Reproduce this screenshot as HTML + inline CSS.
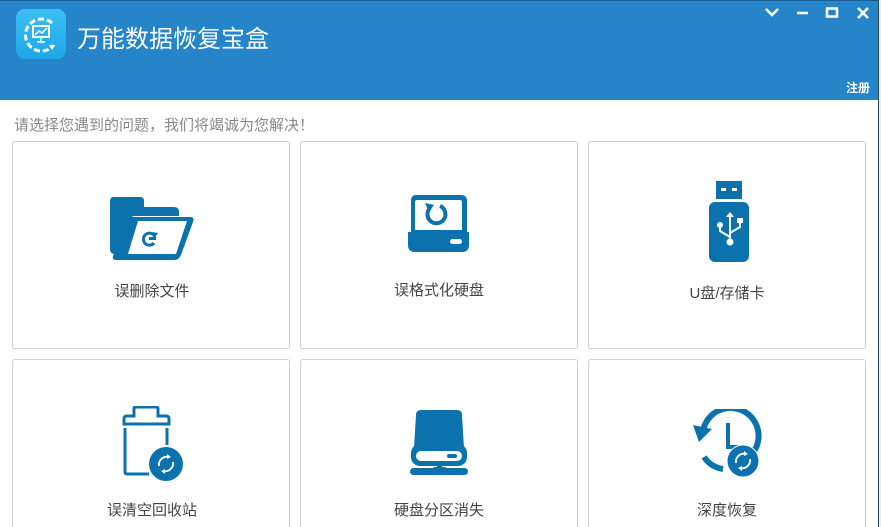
<!DOCTYPE html>
<html style="width:881px;height:527px;overflow:hidden"><head><meta charset="utf-8"><style>
html,body{margin:0}
body{width:881px;height:527px;overflow:hidden;background:#fff;font-family:"Liberation Sans","Noto Sans CJK SC",sans-serif;position:relative}
.hd{position:absolute;left:0;top:0;width:878px;height:100px;background:#2585c8;border-top:1px solid #1a5d8e;box-sizing:border-box}
.strip{position:absolute;left:878px;top:0;width:3px;height:527px;background:#e8eef2;border-left:1px solid #2a4a60;box-sizing:border-box}
.logo{position:absolute;left:16px;top:9px;width:50px;height:50px;border-radius:9px;background:linear-gradient(#3cc0f2,#1ea6e8)}
.title{position:absolute;left:77px;top:19px;color:#fff;font-size:24px}
.reg{position:absolute;left:846px;top:79px;color:#fff;font-size:12px;font-weight:bold}
.tip{position:absolute;left:14px;top:114px;color:#888;font-size:15px}
.card{position:absolute;width:278px;height:208px;border:1px solid #d0d0d0;border-radius:3px;box-sizing:border-box}
.lb{position:absolute;width:278px;text-align:center;font-size:15px;color:#444}
svg{position:absolute}
</style></head><body>
<div class="hd"></div>
<div class="strip"></div>
<div class="logo"><svg width="50" height="50" viewBox="0 0 50 50"><path d="M36 14 A16 16 0 1 0 38 36" fill="none" stroke="#fff" stroke-width="3" stroke-dasharray="6 3"/><path d="M33 36 l6 0 l-3 5z" fill="#fff"/><rect x="17" y="17" width="16" height="11" fill="none" stroke="#fff" stroke-width="2"/><path d="M19 26 l4-4 3 2 5-5 M25 28 v4 M21 33 h8" stroke="#fff" stroke-width="1.5" fill="none"/></svg></div>
<div class="title">万能数据恢复宝盒</div>
<svg style="left:764px;top:6px" width="80" height="14"><path d="M2 3 l6 6 6-6" stroke="#fff" stroke-width="2.5" fill="none"/><path d="M33 7 h11" stroke="#fff" stroke-width="2.5"/><rect x="63" y="2.5" width="10" height="8" stroke="#fff" stroke-width="2.5" fill="none"/></svg>
<svg style="left:856px;top:7px" width="14" height="12"><path d="M2 1 l10 10 M12 1 l-10 10" stroke="#fff" stroke-width="2.5"/></svg>
<div class="reg">注册</div>
<div class="tip">请选择您遇到的问题，我们将竭诚为您解决！</div>

<div class="card" style="left:12px;top:141px"></div>
<div class="card" style="left:300px;top:141px"></div>
<div class="card" style="left:588px;top:141px"></div>
<div class="card" style="left:12px;top:359px;height:180px"></div>
<div class="card" style="left:300px;top:359px;height:180px"></div>
<div class="card" style="left:588px;top:359px;height:180px"></div>

<div class="lb" style="left:13px;top:280px">误删除文件</div>
<div class="lb" style="left:300px;top:279px">误格式化硬盘</div>
<div class="lb" style="left:588px;top:282px">U盘/存储卡</div>
<div class="lb" style="left:13px;top:499px">误清空回收站</div>
<div class="lb" style="left:300px;top:499px">硬盘分区消失</div>
<div class="lb" style="left:588px;top:499px">深度恢复</div>

<svg style="left:110px;top:197px" width="84" height="64" viewBox="0 0 84 64"><path d="M3 0 h27 q4 0 4 4 v6 h30 q5 0 5 5 v4 h-44 q-4 0 -6 4 l-14 38 v-4 h0 q-5 0 -5 -5 v-47 q0 -5 3 -5z" fill="#0b72ad"/><path d="M22 20 h58 q5 0 3 5 l-12 33 q-2 5 -7 5 h-58 q-4 0 -3 -4 l13 -34 q2 -5 6 -5z" fill="#0b72ad"/><path d="M28 24 h49 l-11 33 h-48z" fill="#fff"/><path d="M45 40 a6 6 0 1 0 -1 6" fill="none" stroke="#0b72ad" stroke-width="3"/><path d="M39 41.5 h7" stroke="#0b72ad" stroke-width="3"/><path d="M42 35 l6 1 -3 4z" fill="#0b72ad"/></svg>
<svg style="left:408px;top:195px" width="62" height="58" viewBox="0 0 62 58"><path d="M8 0 h45 q6 0 6 6 v34 h-56 v-34 q0 -6 5 -6z" fill="#0b72ad"/><path d="M9 5 h43 q2 0 2 2 v28 h-47 v-28 q0 -2 2 -2z" fill="#fff"/><path d="M0 37 h61 v13 q0 7 -7 7 h-47 q-7 0 -7 -7z" fill="#0b72ad"/><rect x="42" y="44" width="12" height="5" rx="2.5" fill="#fff"/><path d="M22 13 a9 9 0 1 0 10 -2" fill="none" stroke="#0b72ad" stroke-width="4"/><path d="M17 8 l9 2 -5 7z" fill="#0b72ad"/></svg>
<svg style="left:708px;top:181px" width="42" height="82" viewBox="0 0 42 82"><rect x="8" y="0" width="26" height="18" fill="#0b72ad"/><rect x="13" y="7" width="5" height="3" fill="#fff"/><rect x="24" y="7" width="5" height="3" fill="#fff"/><rect x="1" y="21" width="40" height="60" rx="6" fill="#0b72ad"/><path d="M22 34 v24 M12 44 v6 l10 6 M32 40 v6 l-10 6" stroke="#fff" stroke-width="2" fill="none"/><path d="M18 36 l4 -5 4 5z" fill="#fff"/><circle cx="12" cy="44" r="3" fill="#fff"/><rect x="29" y="37" width="6" height="5" fill="#fff"/><circle cx="22" cy="61" r="3.5" fill="#fff"/></svg>
<svg style="left:121px;top:406px" width="63" height="76" viewBox="0 0 63 76"><path d="M13 10 v-7 q0 -2 2 -2 h20 q2 0 2 2 v7 h8 q3 0 3 3 v5 h-45 v-5 q0 -3 3 -3z" fill="none" stroke="#0b72ad" stroke-width="3"/><path d="M4 22 v44 q0 2 2 2 h22 M46 22 v17" fill="none" stroke="#0b72ad" stroke-width="3"/><circle cx="45" cy="58" r="17" fill="#0b72ad"/><path d="M38 60 a8 8 0 0 1 10 -9 M52 56 a8 8 0 0 1 -10 9" stroke="#fff" stroke-width="1.8" fill="none"/><path d="M46 48 l4 3 -4 2z M44 68 l-4 -3 4 -2z" fill="#fff"/></svg>
<svg style="left:410px;top:410px" width="58" height="65" viewBox="0 0 58 65"><path d="M11 0 h36 q5 0 5 5 l2 33 h-50 l2 -33 q0 -5 5 -5z" fill="#0b72ad"/><rect x="1" y="34" width="56" height="22" rx="9" fill="#0b72ad"/><rect x="6" y="41" width="46" height="10" rx="5" fill="#fff"/><rect x="37" y="44" width="10" height="4" rx="2" fill="#0b72ad"/><rect x="27" y="55" width="5" height="6" fill="#0b72ad"/><rect x="0" y="58" width="58" height="7" rx="3.5" fill="#0b72ad"/><rect x="22" y="57" width="15" height="8" rx="3" fill="#0b72ad"/></svg>
<svg style="left:693px;top:409px" width="70" height="68" viewBox="0 0 70 68"><path d="M10 22 A28 28 0 1 1 56 48" fill="none" stroke="#0b72ad" stroke-width="6"/><path d="M11 48 A28 28 0 0 0 30 60" fill="none" stroke="#0b72ad" stroke-width="6"/><path d="M0 16 l19 4 -13 13z" fill="#0b72ad"/><path d="M35 14 v24 h12" fill="none" stroke="#0b72ad" stroke-width="4"/><circle cx="50" cy="52" r="16" fill="#0b72ad" stroke="#fff" stroke-width="1"/><path d="M43 54 a8 8 0 0 1 10 -9 M57 50 a8 8 0 0 1 -10 9" stroke="#fff" stroke-width="1.8" fill="none"/><path d="M51 42 l4 3 -4 2z M49 62 l-4 -3 4 -2z" fill="#fff"/></svg>
</body></html>
